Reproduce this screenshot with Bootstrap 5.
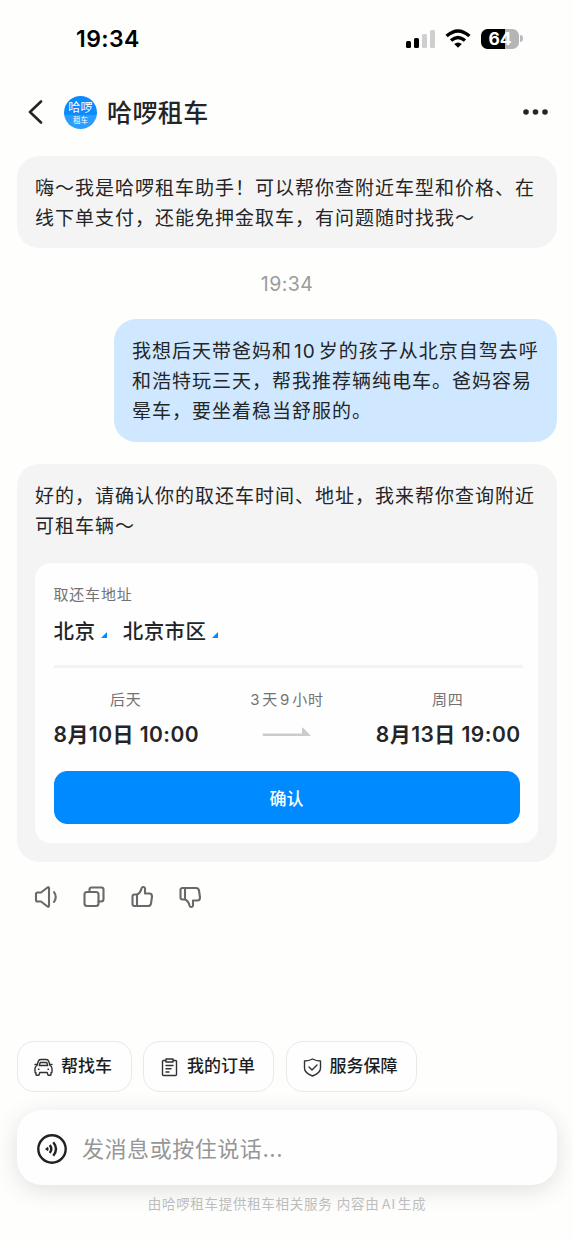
<!DOCTYPE html>
<html lang="zh-CN">
<head>
<meta charset="utf-8">
<meta name="viewport" content="width=device-width, initial-scale=1">
<title>哈啰租车</title>
<link href="https://cdn.jsdelivr.net/npm/bootstrap@5.3.0/dist/css/bootstrap.min.css" rel="stylesheet">
<style>
body{font-family:Inter,"Noto Sans CJK SC",sans-serif;background:#fefefd;color:#242526;height:1242px;overflow:hidden}
svg{display:block;flex:none}
.status-bar{height:78px;padding:0 50px 1px 76px;color:#000}
.clock{font-size:23px;font-weight:600;line-height:1;letter-spacing:.4px;padding-top:2px}
.wifi{margin:0 10px 0 9px}
.battery{width:38px;height:20px;border-radius:6.5px;background:linear-gradient(90deg,#000 24px,#b5b5b6 24px);color:#fff;font-size:17.5px;font-weight:700;line-height:20px;text-align:center}
.battery-tip{width:3px;height:7px;border-radius:0 3px 3px 0;background:#bbb;margin-left:1px}
.title-bar{height:68px;padding:0 25px 0 28px}
.brand-logo{width:33px;height:33px;background:linear-gradient(#0a8cfd 57%,#2d9cff 57%);color:#fff;line-height:1;margin-left:21px}
.brand-logo b{font-size:12px;font-weight:400;margin-top:6px;letter-spacing:.2px}
.brand-logo i{font-size:7.5px;font-style:normal;margin-top:3px}
.brand-name{font-size:25px;letter-spacing:.4px;font-weight:500;line-height:1;margin-left:10px;padding-top:2px}
.chat{padding:10px 16px 0 17px}
.bubble{font-size:19px;letter-spacing:1px;line-height:30px;background:#f4f4f5;border-radius:22px;padding:18px 12px 0 18px}
.hello{height:92px}
.stamp{font-size:19.5px;line-height:24px;letter-spacing:.4px;color:#9b9b9c;margin:24px 0 23px}
.mine{background:#d0e8ff;width:443px;height:123px}
.mine span{margin:0 3px 0 2px}
.reply{height:398px;margin-top:22px}
.trip{width:503px;height:280px;background:#fefefe;border-radius:16px;margin-top:21px;padding:20px 18.5px 0 18.5px;letter-spacing:0}
.hint{font-size:15px;line-height:24px;letter-spacing:.8px;color:#727273}
.gap-num{margin-right:2px}
.gap-num + .gap-num{margin-left:2px}
.city{font-size:20.5px;font-weight:500;line-height:30px;letter-spacing:.4px;margin-top:10px}
.city svg{margin:5px 0 0 6px}
.city span + svg + span{margin-left:15.5px}
.rule{height:3px;background:#f3f3f4;margin:18px -3px 0 0}
.when{margin-top:20px}
.date{font-size:21px;font-weight:600;line-height:28px;letter-spacing:.45px;white-space:nowrap;margin:9px -1px -1px 0}
.arrow{margin-top:15px}
.confirm{--bs-btn-bg:#008aff;--bs-btn-border-color:#008aff;--bs-btn-color:#fff;height:53px;border-radius:13px;font-size:17px;font-weight:500;margin-top:23px;padding:4px 0 0}
.tools{height:24px;padding-left:16.5px;margin-top:23px;gap:24px}
.tools svg{fill:none;stroke:#68696b;stroke-width:2.100;stroke-linejoin:round;stroke-linecap:round}
.chips{margin-top:132px;gap:11.5px}
.chip{height:51px;border:1px solid #e9e9eb;border-radius:17px;background:#fefefe;font-size:17px;font-weight:500;padding:1px 0 0 16px;gap:8px;color:#1c1d1e}
.chip svg{fill:none;stroke:#303134;stroke-width:1.4;stroke-linejoin:round;stroke-linecap:round}
.composer{height:75px;border-radius:25px;background:#fefefe;box-shadow:0 5px 25px rgba(0,0,0,.12);margin-top:18px;padding:2px 0 0 20px}
.placeholder-line{font-size:22px;letter-spacing:.55px;line-height:1;color:#969697;margin-left:15px;padding-top:1px}
.notice{font-size:13.5px;letter-spacing:.7px;line-height:20px;color:#bdbdbe;margin-top:9px;position:relative}
.notice span{margin:0 2px}
</style>
</head>
<body>
<header>
  <div class="status-bar d-flex align-items-center justify-content-between">
    <span class="clock">19:34</span>
    <div class="d-flex align-items-center">
      <svg width="30" height="20" viewBox="0 0 30 20"><rect x="0" y="12" width="5" height="7" rx="1.5"/><rect x="8" y="9" width="5" height="10" rx="1.5"/><g fill="#cfcfd0"><rect x="16" y="5" width="5" height="14" rx="1.5"/><rect x="24" y="1" width="5" height="18" rx="1.5"/></g></svg>
      <svg width="26" height="20" viewBox="0 0 26 20" class="wifi" fill="none" stroke="#000" stroke-width="3.4"><path d="M1.600 7.100Q13-3.200 24.400 7.100M6 11.600q7-6.200 14 0"/><path d="M13 18.700l-3.800-3.800q3.800-3 7.600 0z" fill="#000" stroke="none"/></svg>
      <div class="battery">64</div><div class="battery-tip"></div>
    </div>
  </div>
  <div class="title-bar d-flex align-items-center">
    <svg width="15" height="24" viewBox="0 0 15 24" fill="none" stroke="#242526" stroke-width="2.600" stroke-linecap="round" stroke-linejoin="round"><path d="M13 1.500 2 12l11 10.500"/></svg>
    <div class="brand-logo rounded-circle d-flex flex-column align-items-center"><b>哈啰</b><i>租车</i></div>
    <span class="brand-name">哈啰租车</span>
    <svg class="ms-auto" width="25" height="6" viewBox="0 0 25 6" fill="#242526"><circle cx="3" cy="3" r="2.800"/><circle cx="12.500" cy="3" r="2.800"/><circle cx="22" cy="3" r="2.800"/></svg>
  </div>
</header>
<main class="chat">
  <div class="bubble hello">嗨～我是哈啰租车助手！可以帮你查附近车型和价格、在<br>线下单支付，还能免押金取车，有问题随时找我～</div>
  <div class="stamp text-center">19:34</div>
  <div class="bubble mine ms-auto text-nowrap">我想后天带爸妈和<span>10</span>岁的孩子从北京自驾去呼<br>和浩特玩三天，帮我推荐辆纯电车。爸妈容易<br>晕车，要坐着稳当舒服的。</div>
  <div class="bubble reply">好的，请确认你的取还车时间、地址，我来帮你查询附近<br>可租车辆～
    <div class="trip">
      <div class="hint">取还车地址</div>
      <div class="city d-flex align-items-center">
        <span>北京</span><svg width="6" height="6" viewBox="0 0 6 6"><path d="M6 0v6H0z" fill="#008aff"/></svg>
        <span>北京市区</span><svg width="6" height="6" viewBox="0 0 6 6"><path d="M6 0v6H0z" fill="#008aff"/></svg>
      </div>
      <div class="rule"></div>
      <div class="when d-flex justify-content-between text-center">
        <div><div class="hint">后天</div><div class="date">8月10日 10:00</div></div>
        <div class="d-flex flex-column align-items-center"><div class="hint"><span class="gap-num">3</span>天<span class="gap-num">9</span>小时</div>
          <svg class="arrow" width="49" height="10" viewBox="0 0 49 10"><path d="M1 6.500h39V1q0-1 1-.2L49 9H1q-1-1.300 0-2.500z" fill="#cbcbcc"/></svg></div>
        <div><div class="hint">周四</div><div class="date">8月13日 19:00</div></div>
      </div>
      <button class="btn confirm w-100" type="button">确认</button>
    </div>
  </div>
  <div class="tools d-flex align-items-center">
    <svg width="24" height="24" viewBox="0 0 24 24"><path d="M3.500 7.500H7L13.500 2.500q1.500-1 1.500 1v17q0 2-1.500 1L7 16.500H3.500Q2 16.500 2 15V9q0-1.500 1.500-1.500M20 7q3.500 5 0 10"/></svg>
    <svg width="24" height="24" viewBox="0 0 24 24"><rect x="2.500" y="7" width="14" height="14" rx="2.500"/><path d="M7.500 7V4.500Q7.500 2.500 9.500 2.500h10q2 0 2 2V14q0 2.500-2.500 2.500h-2.500"/></svg>
    <svg width="24" height="24" viewBox="0 0 24 24"><path d="M7 9.500H4.500q-2 0-2 2V19q0 2 2 2H18q2.500 0 3-2.500l1-7Q22 8.500 19.500 8.500h-4.500V5Q15.500 2 13 2q-1 0-1.500 1.500Q10.500 8 7 9.500zM7 9.500V21"/></svg>
    <svg width="24" height="24" viewBox="0 0 24 24"><path d="M7 14.500H4.500q-2 0-2-2V5q0-2 2-2H18q2.500 0 3 2.500l1 7q0 3-2.500 3h-4.500V19q.5 3-2 3-1 0-1.500-1.500Q10.500 16 7 14.500zM7 14.500V3"/></svg>
  </div>
  <div class="chips d-flex">
    <div class="chip d-flex align-items-center" style="width:114.5px">
      <svg width="19" height="19" viewBox="0 0 19 19"><path d="M3 7.500l1.200-4Q5 1.500 6.500 1.500h6q1.500 0 2.300 2L16 7.500q2 1.200 2 3V14q0 .8-1 .8v1.700q0 .8-.8.800h-1.400q-.8 0-1-.8l-.6-2H5.800l-.6 2q-.2.800-1 .8H2.800q-.8 0-.8-.8v-1.700q-1 0-1-.8v-3.500q0-1.800 2-3zM5.300 7.500l.9-3h6.600l.9 3zM1 6.500h1.500M16.500 6.500H18M4.500 11.300h.5M14 11.300h.5"/></svg><span>帮找车</span></div>
    <div class="chip d-flex align-items-center" style="width:131px">
      <svg width="19" height="19" viewBox="0 0 19 19"><path d="M6 2.500H3.500Q2.500 2.500 2.500 3.500v13q0 1 1 1h12q1 0 1-1v-13q0-1-1-1h-2.500M6 1h7v3H6zM6 7.500h7M6 10.800h5M6 14h3"/></svg><span>我的订单</span></div>
    <div class="chip d-flex align-items-center" style="width:131px">
      <svg width="19" height="19" viewBox="0 0 19 19"><path d="M9.500 1Q13 3 17.500 3v7q0 5-8 8-8-3-8-8V3q4.500 0 8-2zM6 9l3 3 5-5"/></svg><span>服务保障</span></div>
  </div>
  <div class="composer d-flex align-items-center">
    <svg width="30" height="30" viewBox="0 0 30 30" fill="none" stroke="#202123" stroke-width="2.400"><circle cx="15" cy="15" r="13.700"/><path d="M8 15l3-2.300q1.300 2.300 0 4.600z" fill="#202123" stroke="none"/><path d="M12.800 11q3 4 0 8M16.300 8.300q5.400 6.700 0 13.400"/></svg>
    <span class="placeholder-line">发消息或按住说话...</span>
  </div>
  <div class="notice text-center">由哈啰租车提供租车相关服务 内容由<span>AI</span>生成</div>
</main>
<script src="https://cdn.jsdelivr.net/npm/bootstrap@5.3.0/dist/js/bootstrap.bundle.min.js"></script>
</body>
</html>
